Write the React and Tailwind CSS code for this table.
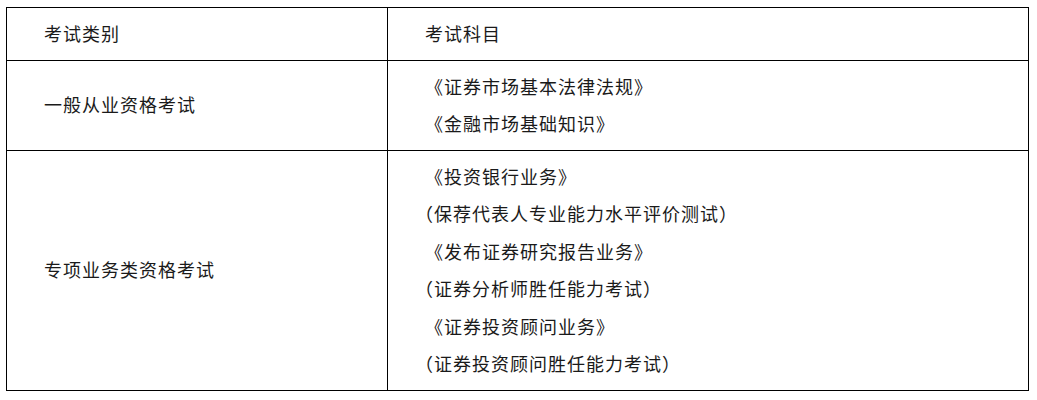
import React from "react";

const rows = [
  { cat: "一般从业资格考试", items: ["《证券市场基本法律法规》", "《金融市场基础知识》"] },
  {
    cat: "专项业务类资格考试",
    items: [
      "《投资银行业务》",
      "（保荐代表人专业能力水平评价测试）",
      "《发布证券研究报告业务》",
      "（证券分析师胜任能力考试）",
      "《证券投资顾问业务》",
      "（证券投资顾问胜任能力考试）",
    ],
  },
];

function Line({ text }) {
  const paren = text.startsWith("（");
  return <div className={paren ? "-ml-[10px]" : ""}>{text}</div>;
}

export default function App() {
  return (
    <div
      className="w-[1037px] h-[400px] bg-white pt-[7px] pl-[6px] text-[18px] tracking-[1px] leading-[37.5px] text-[#1a1a1a]"
      style={{ fontFamily: '"Noto Sans CJK SC", "Noto Sans", sans-serif' }}
    >
      <div className="w-[1023px] grid grid-cols-[381px_1fr] border border-black">
        <div className="border-r border-b border-black py-[7px] pl-[37px] flex items-center">考试类别</div>
        <div className="border-b border-black py-[7px] pl-[37px] flex items-center">考试科目</div>
        {rows.map((r, i) => (
          <React.Fragment key={i}>
            <div
              className={
                "border-r border-black py-[7px] pl-[37px] flex items-center " +
                (i < rows.length - 1 ? "border-b" : "")
              }
            >
              {r.cat}
            </div>
            <div
              className={
                "border-black py-[7px] pl-[37px] flex flex-col justify-center " +
                (i < rows.length - 1 ? "border-b" : "")
              }
            >
              {r.items.map((t, j) => (
                <Line key={j} text={t} />
              ))}
            </div>
          </React.Fragment>
        ))}
      </div>
    </div>
  );
}
